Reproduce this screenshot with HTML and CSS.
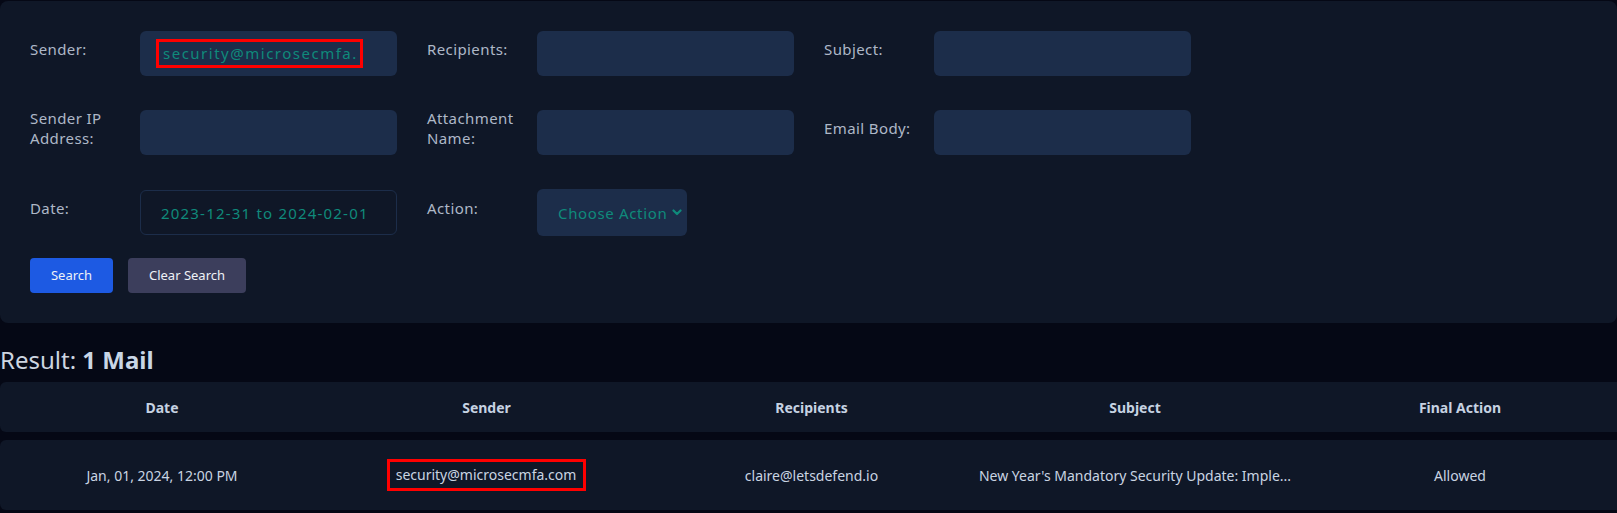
FILE: index.html
```html
<!DOCTYPE html>
<html lang="en">
<head>
<meta charset="utf-8">
<title>Email Security</title>
<link rel="stylesheet" href="styles.css">
</head>
<body>
<section class="panel">
  <div class="fields">
    <div class="field">
      <label class="label">Sender:</label>
      <div class="input sender"><span class="mark">security@microsecmfa.</span></div>
    </div>
    <div class="field">
      <label class="label">Recipients:</label>
      <div class="input"></div>
    </div>
    <div class="field">
      <label class="label">Subject:</label>
      <div class="input"></div>
    </div>
    <div class="field">
      <label class="label">Sender IP Address:</label>
      <div class="input"></div>
    </div>
    <div class="field">
      <label class="label">Attachment Name:</label>
      <div class="input"></div>
    </div>
    <div class="field">
      <label class="label">Email Body:</label>
      <div class="input"></div>
    </div>
    <div class="field tall">
      <label class="label">Date:</label>
      <div class="input date">2023-12-31 to 2024-02-01</div>
    </div>
    <div class="field tall">
      <label class="label">Action:</label>
      <div class="select">Choose Action
        <svg class="chev" width="10" height="7" viewBox="0 0 10 7"><path d="M1.5 1.5 L5 5 L8.5 1.5" fill="none" stroke="currentColor" stroke-width="2.2" stroke-linecap="round" stroke-linejoin="round"/></svg>
      </div>
    </div>
  </div>
  <div class="buttons">
    <button class="btn primary">Search</button>
    <button class="btn secondary">Clear Search</button>
  </div>
</section>

<h2 class="result">Result: <b>1 Mail</b></h2>

<div class="table">
  <div class="row head">
    <div class="cell">Date</div>
    <div class="cell">Sender</div>
    <div class="cell">Recipients</div>
    <div class="cell">Subject</div>
    <div class="cell">Final Action</div>
  </div>
  <div class="row body">
    <div class="cell">Jan, 01, 2024, 12:00 PM</div>
    <div class="cell"><span class="mark cellmark">security@microsecmfa.com</span></div>
    <div class="cell">claire@letsdefend.io</div>
    <div class="cell">New Year's Mandatory Security Update: Imple...</div>
    <div class="cell">Allowed</div>
  </div>
</div>
</body>
</html>
```
FILE: styles.css
```css
* { box-sizing: border-box; }
html, body { margin: 0; padding: 0; }
body {
  background: #050815;
  font-family: "Noto Sans", "Open Sans", sans-serif;
  color: #c9d3e0;
  width: 1617px;
  overflow: hidden;
}

.panel {
  margin-top: 1px;
  background: #0f1727;
  border-radius: 8px;
  padding: 30px 30px 30px 30px;
  height: 322px;
}

.fields {
  display: grid;
  grid-template-columns: repeat(3, 367px);
  column-gap: 30px;
  row-gap: 34px;
}

.field {
  display: flex;
  align-items: center;
  height: 45px;
}
.field.tall { height: 47px; }

.label {
  width: 110px;
  flex: none;
  font-size: 15px;
  line-height: 20px;
  letter-spacing: 0.4px;
  color: #aeb8c7;
  padding-right: 10px;
  padding-bottom: 9px;
}

.input {
  width: 257px;
  height: 45px;
  background: #1c2d4a;
  border-radius: 6px;
  display: flex;
  align-items: center;
  padding-left: 16px;
  color: #0f8a7b;
  font-size: 15px;
  letter-spacing: 1.2px;
  white-space: nowrap;
  overflow: hidden;
}
.input.sender { letter-spacing: 1.5px; }

.input.date {
  height: 45px;
  background: transparent;
  border: 1px solid #1c2d4a;
  padding-left: 20px;
}

.select {
  width: 150px;
  height: 47px;
  background: #1c2d4a;
  border-radius: 6px;
  display: flex;
  align-items: center;
  padding-left: 21px;
  color: #0f8a7b;
  font-size: 15px;
  letter-spacing: 0.65px;
  white-space: nowrap;
  gap: 5px;
}
.chev { flex: none; color: #0f8a7b; }

.mark {
  border: 3px solid #ff0000;
  display: inline-block;
}
.input .mark {
  padding: 1px 2px 2px 4px;
  line-height: 20px;
}

.buttons {
  display: flex;
  gap: 15px;
  margin-top: 22px;
}
.btn {
  height: 35px;
  border: none;
  border-radius: 4px;
  font-family: "Noto Sans", "Open Sans", sans-serif;
  font-size: 13px;
  color: #eef1f6;
  padding: 0 0 2px 0;
}
.btn.primary { width: 83px; background: #1d5ae3; }
.btn.secondary { width: 118px; background: #3c3e5c; }

.result {
  margin: 22px 0 0 0;
  font-size: 24px;
  line-height: 30px;
  font-weight: 400;
  color: #cdd5e0;
}
.result b { font-weight: 700; color: #c9d6e6; }

.table {
  margin-top: 7px;
  display: flex;
  flex-direction: column;
  gap: 8px;
}
.row {
  display: grid;
  grid-template-columns: 324px 325px 325px 322px 328px;
  width: 1624px;
  background: #0f1727;
  border-radius: 6px;
  align-items: center;
}
.row.head { height: 50px; }
.row.body { height: 70px; }
.cell {
  text-align: center;
  white-space: nowrap;
}
.head .cell {
  font-size: 14px;
  font-weight: 700;
  color: #c6d2e2;
}
.body .cell {
  font-size: 14px;
  color: #c9d4e2;
}
.cellmark {
  padding: 3px 7px 3px 6px;
  line-height: 20px;
}
```
